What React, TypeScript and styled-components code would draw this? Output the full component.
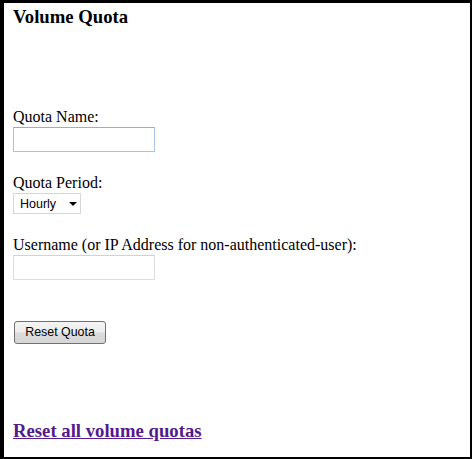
import styled, { createGlobalStyle } from "styled-components";

const GlobalStyle = createGlobalStyle`
  html, body {
    margin: 0;
    padding: 0;
    background: #fff;
  }
  * {
    box-sizing: border-box;
  }
`;

const Frame = styled.div`
  width: 472px;
  height: 459px;
  border-style: solid;
  border-color: #000;
  border-width: 3px 2px 2px 4px;
  padding: 3px 0 0 9px;
  font-family: "Liberation Serif", "Times New Roman", serif;
  color: #000;
  display: flex;
  flex-direction: column;
  align-items: flex-start;
`;

const Title = styled.h3`
  margin: 0;
  font-size: 18.72px;
  line-height: 22px;
  font-weight: bold;
`;

const Form = styled.div`
  margin-top: 80px;
  display: flex;
  flex-direction: column;
  align-items: flex-start;
`;

const Field = styled.div<{ $gap?: number }>`
  display: flex;
  flex-direction: column;
  align-items: flex-start;
  margin-top: ${(p) => p.$gap ?? 0}px;
`;

const Label = styled.label`
  font-size: 16px;
  line-height: 17px;
`;

const TextInput = styled.input<{ $focused?: boolean }>`
  margin: 2px 0 0;
  width: 142px;
  height: 25px;
  padding: 2px 3px;
  border: 1px solid ${(p) => (p.$focused ? "#a6c4e0" : "#dedede")};
  border-top-color: ${(p) => (p.$focused ? "#8fb1d3" : "#d2d2d2")};
  background: #fff;
  font-family: "Liberation Sans", Arial, sans-serif;
  font-size: 13px;
  outline: none;
`;

const SelectWrap = styled.div`
  position: relative;
  margin-top: 2px;
  width: 68px;
  height: 21px;

  &::after {
    content: "";
    position: absolute;
    right: 4px;
    top: 9px;
    border-left: 4px solid transparent;
    border-right: 4px solid transparent;
    border-top: 4px solid #000;
    pointer-events: none;
  }
`;

const Select = styled.select`
  appearance: none;
  -webkit-appearance: none;
  width: 100%;
  height: 100%;
  margin: 0;
  padding: 0 0 0 6px;
  border: 1px solid #d6d6d6;
  border-radius: 0;
  background: #fff;
  color: #000;
  font-family: "Liberation Sans", Arial, sans-serif;
  font-size: 12.5px;
  outline: none;
`;

const Button = styled.button`
  margin: 41px 0 0 1px;
  width: 92px;
  height: 23px;
  padding: 0 0 1px;
  border: 1px solid #707070;
  border-radius: 3px;
  background: linear-gradient(#f4f4f4 0%, #ececec 48%, #dcdcdc 52%, #d6d6d6 100%);
  color: #000;
  font-family: "Liberation Sans", Tahoma, Arial, sans-serif;
  font-size: 12.4px;
  cursor: pointer;
`;

const ResetAll = styled.a`
  margin-top: 76px;
  font-size: 18.72px;
  line-height: 22px;
  font-weight: bold;
  color: #551a8b;
  text-decoration: underline;
`;

export default function App() {
  return (
    <>
      <GlobalStyle />
      <Frame>
        <Title>Volume Quota</Title>
        <Form>
          <Field>
            <Label htmlFor="quota-name">Quota Name:</Label>
            <TextInput id="quota-name" type="text" $focused />
          </Field>
          <Field $gap={22}>
            <Label htmlFor="quota-period">Quota Period:</Label>
            <SelectWrap>
              <Select id="quota-period" defaultValue="hourly">
                <option value="hourly">Hourly</option>
                <option value="daily">Daily</option>
                <option value="weekly">Weekly</option>
                <option value="monthly">Monthly</option>
              </Select>
            </SelectWrap>
          </Field>
          <Field $gap={22}>
            <Label htmlFor="quota-user">
              Username (or IP Address for non-authenticated-user):
            </Label>
            <TextInput id="quota-user" type="text" />
          </Field>
          <Button type="button">Reset Quota</Button>
        </Form>
        <ResetAll href="#">Reset all volume quotas</ResetAll>
      </Frame>
    </>
  );
}
